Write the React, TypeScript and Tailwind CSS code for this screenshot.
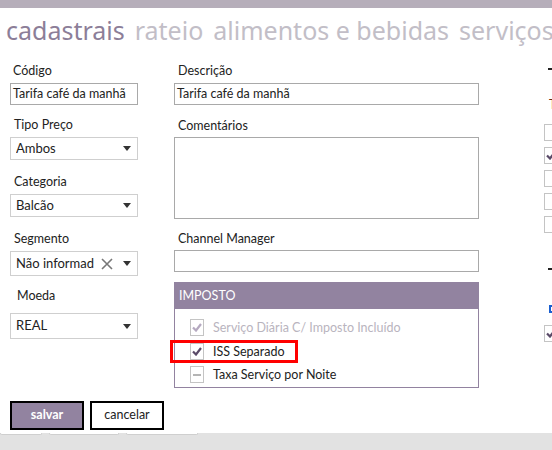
import React from "react";

const font = { fontFamily: 'Lato, "Noto Sans", sans-serif' };
const headFont = { fontFamily: '"Noto Sans", "Open Sans", sans-serif' };

function Caret() {
  return (
    <svg width="8" height="5" viewBox="0 0 8 5" className="shrink-0">
      <path d="M0 0h8L4 5z" fill="#333" />
    </svg>
  );
}

function Label({ children, className = "" }: { children: React.ReactNode; className?: string }) {
  return <div className={`h-[14px] text-[12.5px] leading-[14px] text-[#222] ${className}`}>{children}</div>;
}

function Select({ value, clear, className = "" }: { value: string; clear?: boolean; className?: string }) {
  return (
    <div className={`flex items-center border border-[#cfcfcf] bg-white pl-[5px] pr-[6px] text-[13px] text-[#222] ${className}`}>
      <span className="flex-1 truncate">{value}</span>
      {clear && (
        <svg width="12" height="12" viewBox="0 0 12 12" className="mr-[10px] shrink-0">
          <path d="M1 1l10 10M11 1L1 11" stroke="#777" strokeWidth="1.6" />
        </svg>
      )}
      <Caret />
    </div>
  );
}

function Tick({ color }: { color: string }) {
  return (
    <svg width="10" height="9" viewBox="0 0 10 9">
      <path d="M1 4.5l3 3L9 1" stroke={color} strokeWidth="2.2" fill="none" />
    </svg>
  );
}

function Check({ state, color }: { state: "check" | "dash"; color: string }) {
  return (
    <span className="flex h-[17px] w-[14px] shrink-0 items-center justify-center border border-[#c4c4c4] bg-white">
      {state === "check" ? <Tick color={color} /> : <span className="h-[2px] w-[8px] bg-[#b5b5b5]" />}
    </span>
  );
}

function EmptyBox({ children }: { children?: React.ReactNode }) {
  return (
    <span className="flex h-[17px] w-[14px] items-center justify-center border border-[#c4c4c4] bg-white">
      {children}
    </span>
  );
}

export default function App() {
  return (
    <div className="relative h-[450px] w-[552px] overflow-hidden bg-white" style={font}>
      <div className="h-[8px] bg-[#b6aeba]" />

      {/* Tabs */}
      <div className="flex gap-[10px] whitespace-nowrap pl-[6px] pt-[6px] text-[25px] leading-[32px]" style={headFont}>
        <span className="text-[#8c7e98]">cadastrais</span>
        <span className="text-[#c2bec7]">rateio</span>
        <span className="text-[#c2bec7]">alimentos e bebidas</span>
        <span className="text-[#c2bec7]">serviços</span>
      </div>

      <div className="flex pt-[18px]">
        {/* Left column */}
        <div className="ml-[10px] flex w-[128px] shrink-0 flex-col">
          <Label className="pl-[3px]">Código</Label>
          <div className="mt-[5px] flex h-[22px] items-center border border-[#a9a9a9] px-[2px] text-[12.5px] text-[#222]">
            Tarifa café da manhã
          </div>
          <Label className="mt-[13px] pl-[4px]">Tipo Preço</Label>
          <Select value="Ambos" className="mt-[5px] h-[23px]" />
          <Label className="mt-[15px] pl-[4px]">Categoria</Label>
          <Select value="Balcão" className="mt-[5px] h-[23px]" />
          <Label className="mt-[15px] pl-[4px]">Segmento</Label>
          <Select value="Não informad" clear className="mt-[5px] h-[25px]" />
          <Label className="mt-[13px] pl-[7px]">Moeda</Label>
          <Select value="REAL" className="mt-[10px] h-[26px]" />
        </div>

        {/* Middle column */}
        <div className="ml-[36px] flex w-[305px] shrink-0 flex-col">
          <Label className="pl-[4px]">Descrição</Label>
          <div className="mt-[5px] flex h-[22px] items-center border border-[#a9a9a9] px-[2px] text-[12.5px] text-[#222]">
            Tarifa café da manhã
          </div>
          <Label className="mt-[14px] pl-[4px]">Comentários</Label>
          <div className="mt-[4px] h-[82px] border border-[#a9a9a9]" />
          <Label className="mt-[13px] pl-[4px]">Channel Manager</Label>
          <div className="mt-[4px] h-[22px] border border-[#a9a9a9]" />
          <div className="mt-[10px] flex h-[106px] flex-col border border-[#9283a0]">
            <div className="flex h-[26px] shrink-0 items-center bg-[#9283a0] pl-[4px] text-[12.5px] text-white">IMPOSTO</div>
            <div className="relative flex flex-col gap-[6.5px] pl-[15px] pt-[10px] text-[12.5px] leading-[17px]">
              <div className="flex items-center gap-[9px] text-[#b9b4be]">
                <Check state="check" color="#b5a9c0" />
                Serviço Diária C/ Imposto Incluído
              </div>
              <div className="flex items-center gap-[9px] text-[#222]">
                <Check state="check" color="#5a4a68" />
                ISS Separado
              </div>
              <div className="flex items-center gap-[9px] text-[#222]">
                <Check state="dash" color="#b5b5b5" />
                Taxa Serviço por Noite
              </div>
              <div className="absolute left-[-5px] top-[31px] h-[23px] w-[128px] border-[3px] border-[#f00]" />
            </div>
          </div>
        </div>

        {/* Right partial column */}
        <div className="ml-[65px] flex shrink-0 flex-col">
          <div className="ml-[4px] mt-[4px] h-[2px] w-[6px] bg-[#222]" />
          <div className="ml-[5px] mt-[28px] h-[14px] text-[12.5px] leading-[14px] text-[#6b2a12]">T</div>
          <div className="mt-[12px] flex flex-col gap-[6px]">
            <EmptyBox />
            <EmptyBox>
              <Tick color="#5a4a68" />
            </EmptyBox>
            <EmptyBox />
            <EmptyBox />
            <EmptyBox />
          </div>
          <div className="ml-[4px] mt-[35px] h-[2px] w-[6px] bg-[#222]" />
          <div className="ml-[5px] mt-[35px] h-[8px] w-[6px] border-2 border-[#1a5fd0]" />
          <div className="mt-[12px]">
            <EmptyBox>
              <Tick color="#5a4a68" />
            </EmptyBox>
          </div>
        </div>
      </div>

      {/* Buttons */}
      <div className="ml-[10px] mt-[13px] flex gap-[6px]">
        <button className="flex h-[29px] w-[74px] items-center justify-center border-2 border-black bg-[#9283a0] text-[12.5px] font-bold text-white">
          salvar
        </button>
        <button className="flex h-[29px] w-[74px] items-center justify-center border-2 border-black bg-white text-[12.5px] text-[#222]">
          cancelar
        </button>
      </div>

      {/* Bottom bar */}
      <div className="absolute bottom-0 left-0 right-0 flex h-[17px] gap-[7px] bg-[#e2e2e2]">
        <div className="h-[2px] w-[42px] rounded-b-[3px] border-x border-b border-[#cfcfcf] bg-white" />
        <div className="h-[2px] w-[70px] rounded-b-[3px] border-x border-b border-[#cfcfcf] bg-white" />
        <div className="h-[2px] w-[72px] rounded-b-[3px] border-x border-b border-[#cfcfcf] bg-white" />
      </div>
    </div>
  );
}
